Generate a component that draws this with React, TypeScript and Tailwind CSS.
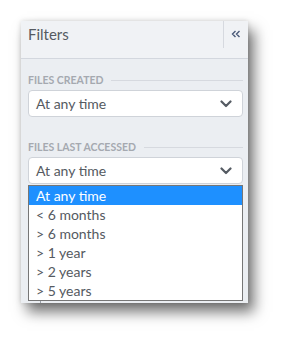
import React from "react";

const Chevron = () => (
  <svg width="12" height="8" viewBox="0 0 12 8" className="shrink-0">
    <path d="M1.5 1.5 L6 6 L10.5 1.5" fill="none" stroke="#555b63" strokeWidth="2.2" strokeLinecap="round" strokeLinejoin="round" />
  </svg>
);

const Select = ({ label }: { label: string }) => (
  <div className="h-[27px] bg-white border border-[#cfd3d9] rounded-[4px] flex items-center justify-between pl-[7px] pr-[10px] text-[14px] text-[#555a61]">
    <span>{label}</span>
    <Chevron />
  </div>
);

const Label = ({ text }: { text: string }) => (
  <div className="flex items-center gap-[8px] h-[12px]">
    <span className="text-[10.5px] font-bold text-[#a5a9b0] leading-none whitespace-nowrap">{text}</span>
    <div className="flex-1 h-px bg-[#d6d9df]" />
  </div>
);

const options = ["At any time", "< 6 months", "> 6 months", "> 1 year", "> 2 years", "> 5 years"];

export default function App() {
  return (
    <div className="w-[290px] h-[345px] bg-white pt-[21px] pl-[21px]" style={{ fontFamily: "Lato, 'Noto Sans', sans-serif" }}>
      <div className="relative w-[227px] h-[282px] bg-[#ebeef2] shadow-[0_0_5px_rgba(0,0,0,0.15),6px_9px_13px_rgba(0,0,0,0.55)] overflow-hidden">
        <div className="h-[38px] bg-[#f0f2f5] border-b border-[#d3d7de] flex items-start">
          <div className="flex-1 pl-[7px] pt-[1px] text-[15px] leading-[24px] text-[#555a61]">Filters</div>
          <div className="w-px h-[27px] bg-[#d6d9df]" />
          <div className="w-[24px] pt-[9px] flex justify-center">
            <svg width="10" height="8" viewBox="0 0 10 8">
              <path d="M4.5 1 L1.5 4 L4.5 7 M8.5 1 L5.5 4 L8.5 7" fill="none" stroke="#4a5a78" strokeWidth="1.4" />
            </svg>
          </div>
        </div>
        <div className="pl-[7px] pr-[5px] pt-[15px]">
          <Label text="FILES CREATED" />
          <div className="mt-[4px]">
            <Select label="At any time" />
          </div>
          <div className="mt-[24px]">
            <Label text="FILES LAST ACCESSED" />
          </div>
          <div className="mt-[4px]">
            <Select label="At any time" />
          </div>
          <div className="mt-[115px] flex items-start gap-[13px] pl-[12px] text-[14px] leading-[17px] text-[#555a61]">
            <div className="w-px h-[17px] bg-[#9aa0a8]" />
            <span>Top level</span>
          </div>
        </div>
        <div className="absolute left-[7px] top-[164px] w-[215px] bg-white border border-[#767676] text-[14px] text-[#555a61]">
          {options.map((o, i) => (
            <div key={o} className={"h-[19px] leading-[19px] pl-[7px] " + (i === 0 ? "bg-[#1e90ff] text-white" : "")}>{o}</div>
          ))}
        </div>
      </div>
    </div>
  );
}
